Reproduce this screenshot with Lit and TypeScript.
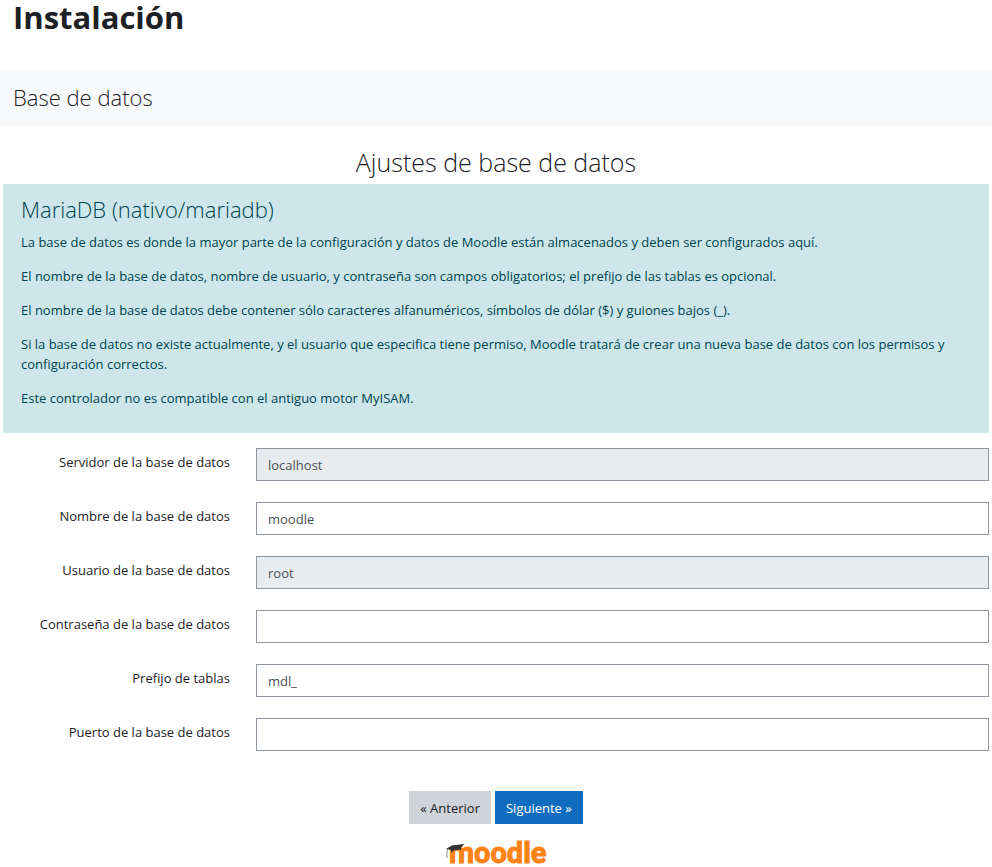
import { LitElement, html, css } from "lit";
import { customElement } from "lit/decorators.js";

interface Field {
  id: string;
  label: string;
  value: string;
  disabled?: boolean;
}

const FIELDS: Field[] = [
  { id: "dbhost", label: "Servidor de la base de datos", value: "localhost", disabled: true },
  { id: "dbname", label: "Nombre de la base de datos", value: "moodle" },
  { id: "dbuser", label: "Usuario de la base de datos", value: "root", disabled: true },
  { id: "dbpass", label: "Contraseña de la base de datos", value: "" },
  { id: "prefix", label: "Prefijo de tablas", value: "mdl_" },
  { id: "dbport", label: "Puerto de la base de datos", value: "" },
];

const NOTES = [
  "La base de datos es donde la mayor parte de la configuración y datos de Moodle están almacenados y deben ser configurados aquí.",
  "El nombre de la base de datos, nombre de usuario, y contraseña son campos obligatorios; el prefijo de las tablas es opcional.",
  "El nombre de la base de datos debe contener sólo caracteres alfanuméricos, símbolos de dólar ($) y guiones bajos (_).",
  "Si la base de datos no existe actualmente, y el usuario que especifica tiene permiso, Moodle tratará de crear una nueva base de datos con los permisos y configuración correctos.",
  "Este controlador no es compatible con el antiguo motor MyISAM.",
];

@customElement("app-root")
export class AppRoot extends LitElement {
  static styles = css`
    :host {
      display: block;
      font: 13px/20px "Open Sans", "Noto Sans", sans-serif;
      color: #1d2125;
      background: #fff;
    }
    h1, h2, h3, p {
      margin: 0;
    }
    .title {
      padding: 0 13px;
      font-size: 31px;
      line-height: 34px;
      font-weight: 700;
    }
    .stage {
      margin-top: 35px;
      padding: 12px 13px;
      background: #f8f9fb;
      font-size: 22px;
      line-height: 33px;
      font-weight: 300;
    }
    .content {
      padding: 20px 3px 0;
    }
    .heading {
      text-align: center;
      font-size: 25px;
      line-height: 32px;
      font-weight: 300;
    }
    .info {
      margin-top: 6px;
      padding: 9px 18px 25px;
      background: #cce6ea;
      color: #00434e;
    }
    .driver {
      font-size: 22px;
      line-height: 33px;
      font-weight: 300;
      margin-bottom: 6px;
    }
    .note + .note {
      margin-top: 14px;
    }
    .fields {
      display: grid;
      gap: 21px;
      margin-top: 15px;
    }
    .row {
      display: grid;
      grid-template-columns: 227px 1fr;
      column-gap: 26px;
    }
    .label {
      padding-top: 4px;
      text-align: right;
    }
    .input {
      box-sizing: border-box;
      width: 100%;
      height: 33px;
      margin: 0;
      padding: 0 11px;
      border: 1px solid #8f959e;
      border-radius: 0;
      background: #fff;
      color: #495057;
      font: inherit;
    }
    .input:disabled {
      background: #e9ecef;
    }
    .actions {
      display: flex;
      justify-content: center;
      gap: 4px;
      margin-top: 40px;
    }
    .button {
      height: 33px;
      padding: 0 11px;
      border: 0;
      background: #ced4da;
      color: #1d2125;
      font: inherit;
    }
    .primary {
      background: #0f6cbf;
      color: #fff;
    }
    .footer {
      display: flex;
      justify-content: center;
      margin-top: 8px;
    }
    .logo {
      display: block;
      width: 104px;
      height: 34px;
    }
    .word {
      font: 700 29px Roboto, sans-serif;
      fill: #ff8315;
      stroke: #ff8315;
      stroke-width: 1px;
    }
  `;

  render() {
    return html`
      <h1 class="title">Instalación</h1>
      <h2 class="stage">Base de datos</h2>
      <form class="content" @submit=${(e: Event) => e.preventDefault()}>
        <h2 class="heading">Ajustes de base de datos</h2>
        <div class="info">
          <h3 class="driver">MariaDB (nativo/mariadb)</h3>
          ${NOTES.map((n) => html`<p class="note">${n}</p>`)}
        </div>
        <div class="fields">
          ${FIELDS.map(
            (f) => html`<div class="row">
              <label class="label" for=${f.id}>${f.label}</label>
              <input class="input" id=${f.id} type="text" .value=${f.value} ?disabled=${f.disabled} />
            </div>`
          )}
        </div>
        <div class="actions">
          <button class="button" type="button">« Anterior</button>
          <button class="button primary" type="submit">Siguiente »</button>
        </div>
      </form>
      <div class="footer">
        <a href="https://moodle.org" aria-label="Moodle">
          <svg class="logo" viewBox="0 0 104 34">
            <text class="word" x="5" y="31">moodle</text>
            <path d="M7 14 L16 13 Q18 15 17 18 Q11 17 7 21 Z" fill="#3a3a3a" />
            <path d="M2 17 L8 13.5 L20.500 12 L16 16.500 Q11 15 7 18 Z" fill="#333" />
            <path d="M3.500 17 Q2.500 21 3 26" stroke="#888" fill="none" />
          </svg>
        </a>
      </div>
    `;
  }
}
